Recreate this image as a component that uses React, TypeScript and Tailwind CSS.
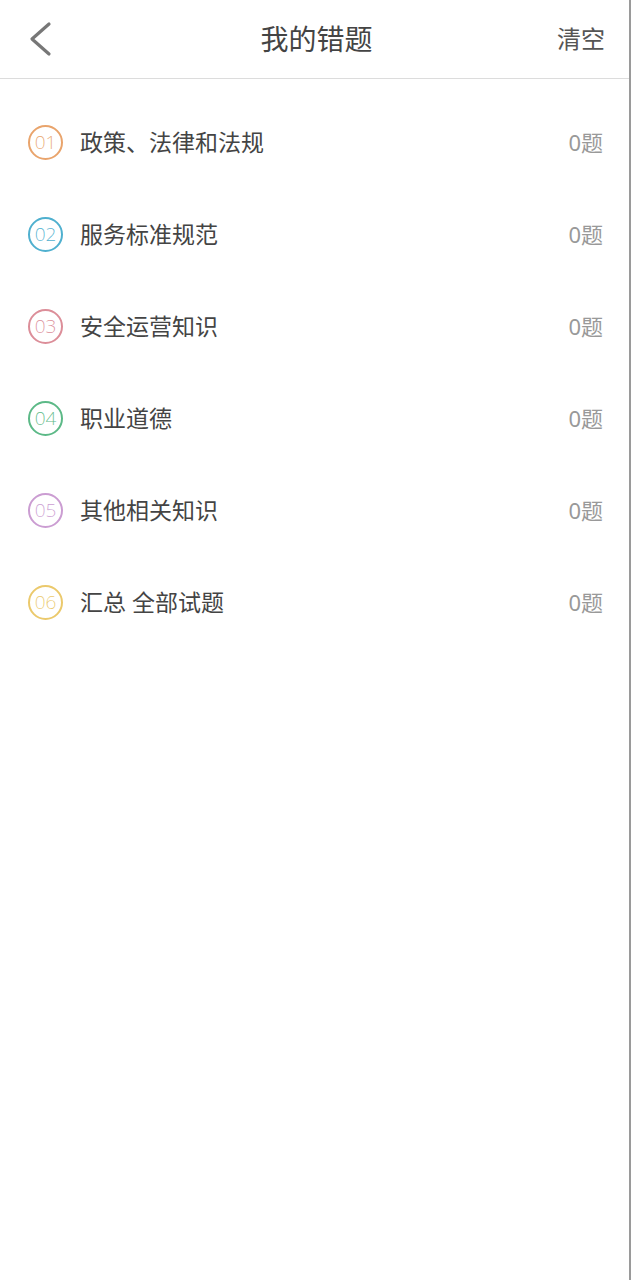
const subjects = [
  { no: "01", label: "政策、法律和法规", color: "#e9a46c" },
  { no: "02", label: "服务标准规范", color: "#4fb0cf" },
  { no: "03", label: "安全运营知识", color: "#dc8e99" },
  { no: "04", label: "职业道德", color: "#5cb987" },
  { no: "05", label: "其他相关知识", color: "#cb9dd2" },
  { no: "06", label: "汇总 全部试题", color: "#ebc96c" },
];

export default function App() {
  return (
    <div
      className="h-[1280px] w-full border-r-2 border-[#9a9a9a] bg-white"
      style={{ fontFamily: '"Noto Sans", "Noto Sans CJK SC", sans-serif' }}
    >
      {/* Header */}
      <header className="grid h-[79px] grid-cols-[1fr_auto_1fr] items-center border-b border-[#dcdcdc] pl-[28px] pr-6">
        <svg className="h-9 w-6" viewBox="0 0 24 36" fill="none" stroke="#777" strokeWidth={3.2} strokeLinecap="round" strokeLinejoin="round">
          <path d="M21 3L4 18l17 15" />
        </svg>
        <h1 className="text-[28px] text-[#444]">我的错题</h1>
        <button className="justify-self-end text-[24px] text-[#555]">清空</button>
      </header>

      {/* List */}
      <ul className="pt-[17px]">
        {subjects.map((s) => (
          <li key={s.no} className="flex h-[92px] items-center pl-[28px] pr-[26px]">
            <span
              className="flex h-[35px] w-[35px] items-center justify-center rounded-full border-2 text-[19px] font-extralight"
              style={{ borderColor: s.color, color: s.color }}
            >
              {s.no}
            </span>
            <span className="ml-[17px] flex-1 text-[23px] text-[#444]">{s.label}</span>
            <span className="text-[22px] text-[#999]">0题</span>
          </li>
        ))}
      </ul>
    </div>
  );
}
